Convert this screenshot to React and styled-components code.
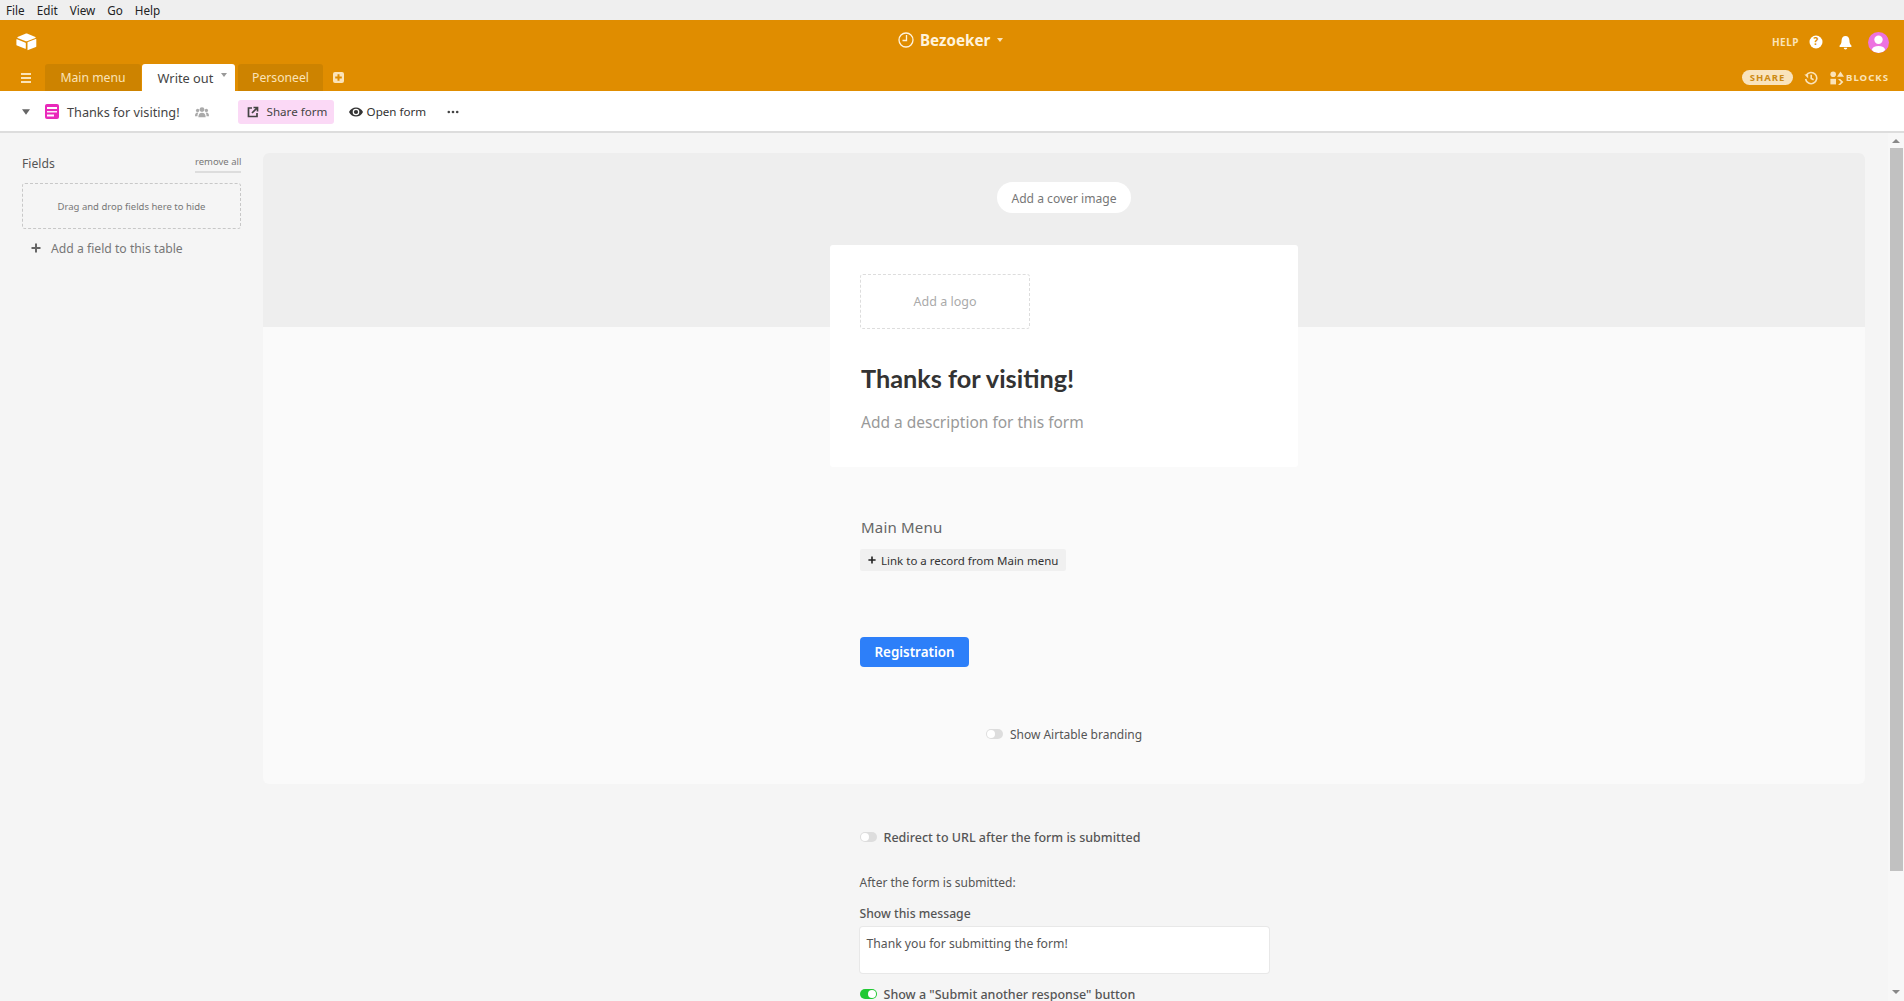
import React from "react";
import styled, { createGlobalStyle } from "styled-components";

const Global = createGlobalStyle`
  html, body { margin: 0; padding: 0; height: 100%; overflow: hidden; background: #f5f5f5; }
  body { font-family: "Noto Sans", "Open Sans", sans-serif; color: #444; }
  * { box-sizing: border-box; }
`;

const Page = styled.div`display: flex; flex-direction: column; height: 1001px; overflow: hidden;`;

const MenuBar = styled.nav`
  height: 20px; background: #efefef; display: flex; align-items: center; padding-left: 6px; gap: 12px;
  font-size: 11.7px; color: #222; flex: none;
`;

const Header = styled.header`height: 71px; background: #e08d00; display: flex; flex-direction: column; flex: none;`;
const HeaderTop = styled.div`height: 44px; display: flex; align-items: center; position: relative; padding: 0 15px 0 16px;`;
const BaseName = styled.div`
  position: absolute; left: 898px; top: 10px; display: flex; align-items: center; gap: 6px;
  color: #fff3dd; font-size: 15.2px; font-weight: 700;
`;
const HeaderRight = styled.div`margin-left: auto; display: flex; align-items: center;`;
const HelpText = styled.span`font-size: 10px; font-weight: 700; letter-spacing: 0.5px; color: #fbe3b8; margin-right: 10px;`;
const Avatar = styled.span`
  width: 21px; height: 21px; border-radius: 50%; background: #ed72e0; margin-left: 16px; overflow: hidden; display: flex;
`;
const TabRow = styled.div`height: 27px; display: flex; align-items: center; padding-left: 20px; padding-right: 15px;`;
const Tab = styled.div`
  height: 27px; display: flex; align-items: center; justify-content: center; position: relative;
  width: ${p => p.$w}px; margin-left: ${p => p.$ml || 0}px; font-size: ${p => p.$active ? 12.8 : 12.2}px; border-radius: 3px 3px 0 0;
  background: ${p => p.$active ? "#fff" : "#cd8300"}; color: ${p => p.$active ? "#444" : "#fbe3b8"};
  padding-right: ${p => p.$active ? 6 : 0}px;
`;
const TabCaret = styled.span`
  position: absolute; right: 8px; top: 9px; width: 0; height: 0;
  border-left: 3.5px solid transparent; border-right: 3.5px solid transparent; border-top: 4px solid #999;
`;
const TabRight = styled.div`margin-left: auto; display: flex; align-items: center;`;
const SharePill = styled.span`
  width: 51px; height: 15px; border-radius: 8px; background: #f9e3bd; color: #cd8a14; font-size: 9.5px; font-weight: 700;
  letter-spacing: 1px; display: flex; align-items: center; justify-content: center; margin-right: 11px;
`;
const BlocksText = styled.span`font-size: 9.6px; font-weight: 700; letter-spacing: 1px; color: #fbe3b8; margin-left: 2px;`;
const IconGap = styled.span`width: ${p => p.$w}px; flex: none;`;

const Toolbar = styled.div`
  height: 42px; background: #fff; border-bottom: 2px solid #ddd; display: flex; align-items: center; flex: none;
  font-size: 13px; color: #444; padding: 1px 0 0 22px;
`;
const ViewName = styled.span`margin: 0 15px 0 8px; font-size: 12.7px;`;
const ShareBtn = styled.div`
  width: 96px; height: 24px; background: #fbd9f6; border-radius: 3px; display: flex; align-items: center; padding-left: 9px; gap: 8px;
  margin-left: 29px; font-size: 11.6px; white-space: nowrap;
`;
const OpenBtn = styled.div`display: flex; align-items: center; gap: 4px; margin-left: 15px; font-size: 11.6px; color: #333;`;

const Body = styled.div`flex: 1; display: flex; min-height: 0;`;

const Sidebar = styled.aside`width: 263px; padding: 22px 22px 0; flex: none;`;
const FieldsHead = styled.div`display: flex; justify-content: space-between; align-items: flex-start;`;
const FieldsTitle = styled.span`font-size: 12.2px; color: #555;`;
const RemoveAll = styled.span`
  font-size: 9.5px; color: #777; border-bottom: 2px solid #ddd; height: 18px; width: 46px; text-align: center; white-space: nowrap;
`;
const DropZone = styled.div`
  height: 46px; margin-top: 10px; border: 1px dashed #c8c8c8; border-radius: 3px; display: flex; align-items: center; justify-content: center;
  font-size: 9.5px; color: #777; width: 219px;
`;
const AddField = styled.div`display: flex; align-items: center; gap: 10px; margin: 9px 0 0 9px; font-size: 12.2px; color: #777; height: 20px;`;

const Main = styled.main`flex: 1; min-width: 0; overflow: hidden; padding: 20px 23px 0 0;`;
const FormCard = styled.section`background: #fafafa; border-radius: 6px; height: 631px; overflow: hidden; position: relative;`;
const Cover = styled.div`height: 174px; background: #eee; display: flex; justify-content: center; padding-top: 29px;`;
const CoverBtn = styled.div`
  width: 134px; height: 31px; border-radius: 16px; background: #fff; color: #777; font-size: 12.1px; padding-top: 1px;
  display: flex; align-items: center; justify-content: center;
`;
const FormColumn = styled.div`width: 468px; margin: -82px auto 0; position: relative;`;
const HeadCard = styled.div`background: #fff; border-radius: 3px; height: 222px; padding: 29px 30px 0;`;
const LogoBox = styled.div`
  width: 170px; height: 55px; border: 1px dashed #ddd; border-radius: 3px; color: #aaa; font-size: 12.5px;
  display: flex; align-items: center; justify-content: center;
`;
const Title = styled.h1`margin: 31px 0 0 1px; font-family: Lato, sans-serif; font-size: 25.3px; font-weight: 700; line-height: 36px; color: #333;`;
const Desc = styled.p`margin: 14px 0 0 1px; font-size: 15.5px; color: #999; line-height: 24px;`;
const FieldBlock = styled.div`padding: 49px 30px 0;`;
const FieldLabel = styled.div`font-size: 15px; color: #666; line-height: 22px; letter-spacing: 0.2px; margin-left: 1px;`;
const LinkBtn = styled.div`
  width: 206px; height: 22px; margin-top: 11px; background: #f0f0f0; border-radius: 2px; display: flex; align-items: center; padding-left: 8px; gap: 5px;
  font-size: 11.5px; color: #333; white-space: nowrap;
`;
const SubmitBtn = styled.div`
  width: 109px; height: 30px; margin-top: 66px; background: #2d7ff9; border-radius: 4px; color: #fff; font-size: 13.4px; font-weight: 600;
  display: flex; align-items: center; justify-content: center;
`;
const Branding = styled.div`display: flex; justify-content: center; align-items: center; gap: 7px; margin-top: 56px; font-size: 12px; color: #555; height: 22px;`;

const Toggle = styled.span`
  width: 17px; height: 10px; border-radius: 5px; flex: none; display: flex; padding: 1px;
  background: ${p => p.$on ? "#20c933" : "#ddd"}; justify-content: ${p => p.$on ? "flex-end" : "flex-start"};
  &::after { content: ""; width: 8px; height: 8px; border-radius: 50%; background: #fff; }
`;

const Settings = styled.div`width: 409px; margin: 43px auto 0;`;
const SettingRow = styled.div`display: flex; align-items: center; gap: 7px; font-size: 12.5px; font-weight: 500; color: #555; height: 20px;`;
const AfterText = styled.div`font-size: 12px; color: #555; margin-top: 26px; height: 20px; line-height: 20px;`;
const ShowLabel = styled.div`font-size: 12.2px; font-weight: 500; color: #555; margin-top: 11px; height: 20px; line-height: 20px;`;
const MsgBox = styled.div`
  height: 46px; margin-top: 3px; margin-bottom: 11px; background: #fff; border-radius: 3px; box-shadow: 0 0 0 1px #e8e8e8; padding: 8px 7px; font-size: 12.2px; color: #555;
`;

const Scrollbar = styled.div`width: 16px; flex: none; background: #f7f7f7; display: flex; flex-direction: column; align-items: center; padding-top: 6px;`;
const ScrollUp = styled.span`width: 0; height: 0; border-left: 4px solid transparent; border-right: 4px solid transparent; border-bottom: 4px solid #888;`;
const ScrollThumb = styled.div`width: 13px; height: 723px; margin-top: 5px; background: #c1c1c1;`;
const ScrollDown = styled.span`width: 0; height: 0; margin-top: 119px; border-left: 4px solid transparent; border-right: 4px solid transparent; border-top: 4px solid #888;`;

const Svg = styled.svg`flex: none; display: block; margin: ${p => p.$m || 0};`;

const Logo = () => (
  <Svg width="21" height="18" viewBox="0 0 21 18" fill="#fff">
    <path d="M10 0.6 1.6 4c-.4.2-.4.7 0 .9l8.300 3.300c.4.1.8.1 1.100 0l8.400-3.300c.4-.2.4-.7 0-.9L11 .6c-.3-.1-.7-.1-1 0z" />
    <path d="M11.500 9.600v7.100c0 .3.3.5.6.4l7.800-3c.2-.1.4-.3.4-.5V6.500c0-.3-.3-.5-.6-.4l-7.800 3c-.2.1-.4.3-.4.5z" />
    <path d="M0.400 6.600c0-.3.3-.5.6-.4l8.500 3.600c.2.1.3.2.3.4v5.200c0 .3-.3.5-.6.4L1 12.400c-.4-.1-.6-.4-.6-.7z" />
  </Svg>
);

const MenuIcon = () => (
  <Svg width="12" height="10" viewBox="0 0 12 10" fill="#fbe3b8">
    <rect x="1" y="0" width="10" height="2" /><rect x="1" y="4" width="10" height="2" /><rect x="1" y="8" width="10" height="2" />
  </Svg>
);
const PlusBox = () => (
  <Svg $m="0 0 0 10px" width="11" height="11" viewBox="0 0 11 11">
    <rect width="11" height="11" rx="2" fill="#fbe3b8" />
    <path d="M5.500 2.200v6.600M2.200 5.500h6.600" stroke="#e08d00" strokeWidth="2" />
  </Svg>
);
const Clock = () => (
  <Svg width="16" height="16" viewBox="0 0 16 16" fill="none" stroke="#fff3dd" strokeWidth="1.300">
    <circle cx="8" cy="8" r="7" /><path d="M8.500 3v5.500H4.500" />
  </Svg>
);
const Caret = ({ color = "#fbe3b8", w = 6, h = 4, m }) => (
  <Svg $m={m} width={w} height={h} viewBox="0 0 6 4" fill={color}><path d="M0 0h6L3 4z" /></Svg>
);
const HelpIcon = () => (
  <Svg width="14" height="14" viewBox="0 0 14 14">
    <circle cx="7" cy="7" r="6.500" fill="#fff" />
    <text x="7" y="10.400" textAnchor="middle" fontSize="10" fontWeight="700" fontFamily="Noto Sans" fill="#e08d00">?</text>
  </Svg>
);
const Bell = () => (
  <Svg $m="0 0 0 16px" width="13" height="15" viewBox="0 0 13 15" fill="#fff">
    <path d="M6.500 1C4 1 2.600 3 2.600 5.300c0 3-1 4.300-2 5.200V12h11.800v-1.500c-1-.9-2-2.200-2-5.200C10.400 3 9 1 6.500 1z" />
    <path d="M4.800 12.800h3.400c0 1-.8 1.700-1.700 1.700s-1.700-.7-1.700-1.700z" />
  </Svg>
);
const AvatarFigure = () => (
  <Svg width="21" height="21" viewBox="0 0 21 21" fill="#fff">
    <circle cx="10.500" cy="7.800" r="4.200" /><ellipse cx="10.500" cy="17.500" rx="6.500" ry="3.500" />
  </Svg>
);
const History = () => (
  <Svg width="14" height="14" viewBox="0 0 14 14" fill="none" stroke="#fbe3b8" strokeWidth="1.600">
    <path d="M2.300 4.200A5.600 5.600 0 1 1 1.600 8" /><path d="M7.200 3.800v3.600l2.400 1.300" />
    <path d="M0.400 3.600h3.800v3.800z" fill="#fbe3b8" stroke="none" />
  </Svg>
);
const Blocks = () => (
  <Svg width="14" height="14" viewBox="0 0 14 14" fill="#fbe3b8">
    <circle cx="3.200" cy="3.200" r="2.800" /><path d="M10.500 .4 14 5.800H7z" /><rect x=".4" y="7.800" width="5.600" height="5.600" />
    <path d="M8 8h2.200l3.200 3-3.200 3H8l3-3z" />
  </Svg>
);
const FormIcon = () => (
  <Svg width="14" height="15" viewBox="0 0 14 15">
    <rect width="14" height="15" rx="2" fill="#e929ba" />
    <rect x="2" y="3" width="10" height="2" fill="#fff" /><rect x="2" y="7" width="10" height="1.500" fill="#fff" opacity=".9" /><rect x="2" y="10.500" width="7" height="2" fill="#fff" />
  </Svg>
);
const People = () => (
  <Svg width="14" height="12" viewBox="0 0 15 12" fill="#aaa">
    <circle cx="7.500" cy="3.400" r="2.600" /><circle cx="2.800" cy="4.300" r="1.800" /><circle cx="12.200" cy="4.300" r="1.800" />
    <path d="M3.600 11.500c0-3.300 1.500-4.800 3.900-4.800s3.900 1.500 3.900 4.800z" /><path d="M0 10.500c0-2.500.8-3.900 2.800-3.900l.8.200c-.7 1-1 2.200-1 3.700zM15 10.500c0-2.500-.8-3.900-2.800-3.900l-.8.200c.7 1 1 2.200 1 3.700z" />
  </Svg>
);
const ShareIcon = () => (
  <Svg width="12" height="12" viewBox="0 0 12 12" fill="none" stroke="#444" strokeWidth="1.700">
    <path d="M5 2H1.500v8.500H10V7" /><path d="M5 7l5-5M6.500 1.500h4v4" />
  </Svg>
);
const Eye = () => (
  <Svg width="14" height="10" viewBox="0 0 14 10">
    <path d="M0 5c1.500-3 4-4.500 7-4.500S12.500 2 14 5c-1.500 3-4 4.500-7 4.500S1.500 8 0 5z" fill="#333" />
    <circle cx="7" cy="5" r="3.300" fill="#fff" /><circle cx="7" cy="5" r="2.100" fill="#333" />
  </Svg>
);
const Dots = () => (
  <Svg $m="0 0 0 21px" width="12" height="4" viewBox="0 0 12 4" fill="#444">
    <circle cx="1.800" cy="2" r="1.300" /><circle cx="6" cy="2" r="1.300" /><circle cx="10.200" cy="2" r="1.300" />
  </Svg>
);
const Plus = ({ size = 10, color = "#666", sw = 2 }) => (
  <Svg width={size} height={size} viewBox="0 0 10 10" stroke={color} strokeWidth={sw}><path d="M5 .5v9M.5 5h9" /></Svg>
);

export default function App() {
  return (
    <Page>
      <Global />
      <MenuBar>
        <span>File</span><span>Edit</span><span>View</span><span>Go</span><span>Help</span>
      </MenuBar>
      <Header>
        <HeaderTop>
          <Logo />
          <BaseName><Clock />Bezoeker<Caret m="0 0 0 1px" /></BaseName>
          <HeaderRight>
            <HelpText>HELP</HelpText>
            <HelpIcon />
            <Bell />
            <Avatar><AvatarFigure /></Avatar>
          </HeaderRight>
        </HeaderTop>
        <TabRow>
          <MenuIcon />
          <Tab $w={96} $ml={13}>Main menu</Tab>
          <Tab $w={93} $ml={1} $active>Write out<TabCaret /></Tab>
          <Tab $w={85} $ml={3}>Personeel</Tab>
          <PlusBox />
          <TabRight>
            <SharePill>SHARE</SharePill>
            <History />
            <IconGap $w={12} />
            <Blocks />
            <BlocksText>BLOCKS</BlocksText>
          </TabRight>
        </TabRow>
      </Header>
      <Toolbar>
        <Caret color="#666" w={8} h={6} />
        <IconGap $w={15} />
        <FormIcon />
        <ViewName>Thanks for visiting!</ViewName>
        <People />
        <ShareBtn><ShareIcon />Share form</ShareBtn>
        <OpenBtn><Eye />Open form</OpenBtn>
        <Dots />
      </Toolbar>
      <Body>
        <Sidebar>
          <FieldsHead>
            <FieldsTitle>Fields</FieldsTitle>
            <RemoveAll>remove all</RemoveAll>
          </FieldsHead>
          <DropZone>Drag and drop fields here to hide</DropZone>
          <AddField><Plus />Add a field to this table</AddField>
        </Sidebar>
        <Main>
          <FormCard>
            <Cover><CoverBtn>Add a cover image</CoverBtn></Cover>
            <FormColumn>
              <HeadCard>
                <LogoBox>Add a logo</LogoBox>
                <Title>Thanks for visiting!</Title>
                <Desc>Add a description for this form</Desc>
              </HeadCard>
              <FieldBlock>
                <FieldLabel>Main Menu</FieldLabel>
                <LinkBtn><Plus size={8} color="#222" />Link to a record from Main menu</LinkBtn>
                <SubmitBtn>Registration</SubmitBtn>
              </FieldBlock>
              <Branding><Toggle />Show Airtable branding</Branding>
            </FormColumn>
          </FormCard>
          <Settings>
            <SettingRow><Toggle />Redirect to URL after the form is submitted</SettingRow>
            <AfterText>After the form is submitted:</AfterText>
            <ShowLabel>Show this message</ShowLabel>
            <MsgBox>Thank you for submitting the form!</MsgBox>
            <SettingRow><Toggle $on />Show a "Submit another response" button</SettingRow>
          </Settings>
        </Main>
        <Scrollbar>
          <ScrollUp />
          <ScrollThumb />
          <ScrollDown />
        </Scrollbar>
      </Body>
    </Page>
  );
}
